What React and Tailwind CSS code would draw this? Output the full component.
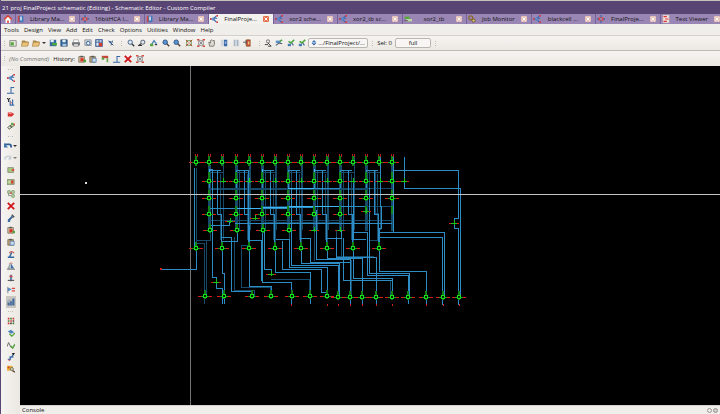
import clsx from "clsx";

const icons = {
  home: <><path d="M0 6 5 1l5 5H8v4H2V6z" fill="#fff" /><path d="M0 6 5 1l5 5" fill="none" stroke="#d8432f" strokeWidth="2" /><path d="M4 7h2v3H4z" fill="#d8432f" /></>,
  library: <><path d="M1 1h3v8H1z" fill="#d04848" /><path d="M3 1h5v8H3z" fill="#3e78b8" /><path d="M4 2h2v5H4z" fill="#d6e8f8" /></>,
  design: <><path d="M5 0v10M0 5h10" stroke="#3a6ba8" strokeWidth="1.6" /><path d="M2 3h6v4H2z" fill="#d44" /><path d="M4 4h2v2H4z" fill="#7ab0e0" /></>,
  schematic: <><path d="M0 5h4M4 5l4-4M4 5l4 4M4 4h5" fill="none" stroke="#3b66a6" strokeWidth="1.4" /><path d="M0 4h2v2H0zM8 0h2v2H8zM8 8h2v2H8z" fill="#e03030" /><path d="M3 3h3v4H3z" fill="#5a8acb" /></>,
  testbench: <><path d="M1 2h6v3H1z" fill="#58a838" /><path d="M3 5h7v3H3z" fill="#b9d9a0" /><path d="M0 7h5" stroke="#555" /></>,
  gear: <><circle cx="3.5" cy="3.5" r="2.5" fill="none" stroke="#8a6a2a" strokeWidth="1.5" /><circle cx="7" cy="7" r="2" fill="#e9c56a" stroke="#5c4a28" /></>,
  text: <><path d="M1 0h8v10H1z" fill="#f3e4e0" stroke="#a99" strokeWidth=".6" /><path d="M2 2h4M4 5h4M2 8h4" stroke="#d33" strokeWidth="1.5" /></>,
  newFile: <><path d="M1 2h8v7H1z" fill="#e8ece0" stroke="#777" /><path d="M2 4h4v4H2z" fill="#57a83c" /></>,
  open: <><path d="M1 2h4l1 1h3v5H1z" fill="#a98b50" /><path d="M2 4h8L8 9H0z" fill="#ecc378" stroke="#9d7a3f" strokeWidth=".7" /></>,
  save: <><path d="M1 1h8v8H1z" fill="#34689e" stroke="#1d3b5e" strokeWidth=".8" /><path d="M3 1h4v3H3z" fill="#e4eef6" /><path d="M3 6h5v3H3z" fill="#a8c6dc" /></>,
  saveAll: <><path d="M1 1h8v8H1z" fill="#34689e" /><path d="M2 1h4v3H2z" fill="#e4eef6" /><path d="M4 5h6v3H4z" fill="#4dab3b" /></>,
  print: <><path d="M2 1h6v4H2z" fill="#fff" stroke="#888" strokeWidth=".7" /><path d="M0 4h10v4H0z" fill="#777b80" /><path d="M2 6h6v3H2z" fill="#e8e8e8" stroke="#444" strokeWidth=".6" /></>,
  preview: <><path d="M1 1h8v7H1z" fill="#cdd4da" stroke="#667" strokeWidth=".7" /><circle cx="5.3" cy="5.3" r="2.3" fill="#e8f2fa" stroke="#365f91" strokeWidth="1.2" /></>,
  table: <><path d="M1 1h8v8H1z" fill="#e4edf7" stroke="#2b4f88" strokeWidth="1.3" /><path d="M1 4h8M5 1v8" stroke="#2b4f88" /><path d="M5 5h4v4H5z" fill="#d9382f" /></>,
  cut: <><path d="M1 2l5 1-2 3z" fill="#4576ad" /><path d="M3 3l5 5M7 2L5 8" stroke="#38587f" strokeWidth="1.2" /></>,
  zoom: <><circle cx="4" cy="4" r="2.7" fill="#dbe9f6" stroke="#4a6788" strokeWidth="1.2" /><path d="M6 6l3 3" stroke="#3b3b3b" strokeWidth="1.7" /></>,
  zoomBlue: <><circle cx="4" cy="4" r="2.8" fill="#5b94d2" stroke="#31588a" strokeWidth="1.2" /><path d="M6 6l3 3" stroke="#4a4036" strokeWidth="1.7" /></>,
  zoomPrev: <><circle cx="6" cy="4" r="2.6" fill="#e0e8ef" stroke="#555f6c" strokeWidth="1.2" /><path d="M4 6L1 8h4" stroke="#333" strokeWidth="1.3" fill="none" /></>,
  zoomGreen: <><path d="M2 7l3-5 3 4" fill="none" stroke="#4c80b8" strokeWidth="1.6" /><path d="M0 6h4v3H0z" fill="#57ab3c" /><path d="M6 7h3" stroke="#444" strokeWidth="1.5" /></>,
  fit: <><path d="M2 2h6v6H2z" fill="#e5dcd5" stroke="#5a9b48" /><path d="M1 1l8 8M9 1L1 9" stroke="#c33b32" strokeWidth="1.2" /><path d="M4 4h2v2H4z" fill="#fff" /></>,
  fitSel: <><path d="M2 2h6v6H2z" fill="#e3e3e3" stroke="#8c8c8c" /><path d="M0 0h3v2H0zM7 0h3v2H7zM0 8h3v2H0zM7 8h3v2H7z" fill="#d4514a" /><path d="M3 3l4 4M7 3L3 7" stroke="#777" /></>,
  hand: <path d="M2 9L1 4l2 1V2l2-1 1 1 2 0v5L7 9z" fill="#ddd9d3" stroke="#6b665f" strokeWidth="1" />,
  half: <><path d="M1 1h8v8H1z" fill="#cfd6de" /><path d="M5 1h4v8H5z" fill="#3a6ba8" /><path d="M6 3h2v3H6z" fill="#9db8da" /></>,
  halfPale: <><path d="M2 1h7v8H2z" fill="#cdd3db" /><path d="M3 1v8M7 1v8" stroke="#98a6b9" /></>,
  exit: <><path d="M4 1h5v8H4z" fill="#c94539" stroke="#83531f" strokeWidth=".8" /><path d="M0 4h5M3 2l2 2-2 2" stroke="#444" fill="none" /><path d="M6 3h2v4H6z" fill="#eac57a" /></>,
  probe: <><circle cx="5" cy="3" r="2" fill="#eee" stroke="#555" /><path d="M1 7h4M5 5l4 4M5 9h4" stroke="#444" strokeWidth="1.2" /></>,
  check: <><path d="M1 6h4v3H1z" fill="#4779b5" /><path d="M2 3l3 2 4-4" stroke="#4ba43a" strokeWidth="2" fill="none" /><path d="M6 5l2 3" stroke="#3c639a" strokeWidth="1.4" /></>,
  checkBlue: <><path d="M1 2h6v3H1z" fill="#5b92cc" /><path d="M1 8l4-3 4 1" stroke="#505b68" strokeWidth="1.4" fill="none" /><path d="M6 3l3-2" stroke="#50a53e" strokeWidth="2" /></>,
  diamond: <><path d="M5 0l4 4H1z" fill="#3c73b8" /><path d="M1 5h8L5 9z" fill="#315b93" /><path d="M3 4h4v2H3z" fill="#9cc3ea" /></>,
  paste: <><path d="M1 2h7v7H1z" fill="#c4a67a" stroke="#5d503d" strokeWidth=".8" /><path d="M3 1h3v2H3z" fill="#555" /><path d="M4 4h5v5H4z" fill="#c8daec" stroke="#3b6ba5" strokeWidth=".8" /></>,
  pasteRed: <><path d="M1 2h7v7H1z" fill="#d9c3a4" stroke="#5d503d" strokeWidth=".8" /><path d="M3 1h3v2H3z" fill="#555" /><path d="M3 4h4v4H3z" fill="#d93027" /><path d="M7 6h3v3H7z" fill="#4fa33d" /></>,
  align: <><path d="M1 1h8v3H1z" fill="#c8463a" /><path d="M1 3h3v3H1z" fill="#5ba544" /><path d="M7 4h2v5H7z" fill="#64a64d" /></>,
  wire: <path d="M0 9h9M5 9V2h4" fill="none" stroke="#3767a5" strokeWidth="1.3" />,
  del: <path d="M1 1l8 8M9 1L1 9" stroke="#d0161b" strokeWidth="2.3" />,
  wireName: <><path d="M0 0l2 2 2-2M2 2v3" stroke="#222" strokeWidth="1.3" fill="none" /><path d="M4 3v6h5M7 2v6" stroke="#3a6daa" strokeWidth="1.5" fill="none" /><path d="M4 5h2v2H4z" fill="#d77" /></>,
  pin: <><path d="M1 3h5l3 2-3 3H1z" fill="#d72e2e" /><path d="M2 3h4v2H2z" fill="#f08c8c" /></>,
  link: <><path d="M1 7l3-3 2 2-3 3zM4 5l3-3 2 2-3 3z" fill="#ddd" stroke="#4d5d38" strokeWidth="1.2" /><path d="M5 1h3v3H5z" fill="#59a948" /><path d="M8 2h2v2H8z" fill="#d54" /></>,
  undo: <><path d="M1 3h6q2 0 2 4" fill="none" stroke="#2f5f96" strokeWidth="2.4" /><path d="M0 1v6h5z" fill="#4177ae" /></>,
  redo: <><path d="M1 7q0-4 4-4h3" fill="none" stroke="#b9c5d0" strokeWidth="2.4" /><path d="M9 1v6H5z" fill="#a6b7c6" /></>,
  move: <><path d="M1 2h7v6H1z" fill="#a6c97c" stroke="#808976" /><path d="M6 4h3v2H6z" fill="#e0332d" /></>,
  copy: <><path d="M0 2h9v6H0z" fill="#a9c583" stroke="#80836f" /><path d="M5 3h3v4H5z" fill="#d64339" /><path d="M2 4h2v2H2z" fill="#d6e6c0" /></>,
  nodes: <><path d="M1 1h3v3H1zM6 1h3v3H6zM6 6h3v3H6z" fill="#e8efd9" stroke="#5d8a48" /><path d="M2 4v3h3" stroke="#777" fill="none" /><path d="M4 3h2v2H4z" fill="#d44" /></>,
  wrench: <><path d="M2 8l5-5" stroke="#36608f" strokeWidth="2.5" /><path d="M6 1l3 3" stroke="#555" strokeWidth="2" fill="none" /><path d="M1 7h3v3H1z" fill="#3c6da8" /></>,
  rotate: <><path d="M1 9h8M3 9l3-6" stroke="#3568a2" strokeWidth="1.8" /><path d="M3 4q2-4 6 0" stroke="#cf5452" strokeWidth="1.4" fill="none" /></>,
  flipH: <><path d="M1 8l3-6v6z" fill="#b5c3d3" stroke="#677" strokeWidth=".6" /><path d="M5 2l4 6H5z" fill="#396ca8" /><path d="M3 2q2-2 4 0" stroke="#c55" fill="none" /><path d="M0 9h10" stroke="#555" /></>,
  flipV: <><path d="M5 1v8" stroke="#3767a3" strokeWidth="2" /><path d="M1 8h8" stroke="#555" strokeWidth="1.4" /><path d="M3 2h4v2H3z" fill="#ce4a45" /></>,
  flag: <><path d="M1 1v8" stroke="#777" /><path d="M1 2l5 2-5 3z" fill="#5888bd" /><path d="M6 3h4M6 6h4" stroke="#d8433e" strokeWidth="1.5" /></>,
  chart: <path d="M1 9V6h2v3zM4 9V4h2v5zM7 9V1h2v8zM0 5l4-3" fill="#406fa9" stroke="#3f6591" strokeWidth=".6" />,
  grid: <><path d="M1 1h2v2H1zM4 4h2v2H4zM7 1h2v2H7zM1 7h2v2H1z" fill="#ce332c" /><path d="M4 1h2v2H4zM1 4h2v2H1zM7 7h2v2H7z" fill="#3d7e30" /><path d="M7 4h2v2H7zM4 7h2v2H4z" fill="#4a3a30" /></>,
  verify: <><path d="M1 3l4-2 4 3-4 2z" fill="#4d82bf" /><path d="M3 6l3 3 4-4" stroke="#54a53c" strokeWidth="1.6" fill="none" /></>,
  wave: <><path d="M0 7l2-5 3 6" fill="none" stroke="#666" strokeWidth="1.2" /><path d="M5 6l2 3 3-5" stroke="#4c9d36" strokeWidth="1.6" fill="none" /></>,
  steps: <><path d="M1 8h3V5h3V2" fill="none" stroke="#376baa" strokeWidth="1.8" /><path d="M6 0h4L8 3z" fill="#222" /><path d="M2 8h2v2H2z" fill="#c66" /></>,
  inspect: <><path d="M0 1h7v6H0z" fill="#e9ae37" /><path d="M1 2h2v2H1z" fill="#d43b2f" /><circle cx="6" cy="5" r="2" fill="#bcd2b0" stroke="#765" /><path d="M7 7l3 2" stroke="#543" strokeWidth="1.6" /></>,
};

function Icon({ name, className = "size-2" }) {
  return <svg viewBox="0 0 10 10" aria-hidden="true" className={clsx("shrink-0", className)}>{icons[name]}</svg>;
}

function IconButton({ name, className }) {
  return (
    <button aria-label={name} className={clsx("flex items-center justify-center", className)}>
      <Icon name={name} />
    </button>
  );
}

function Grip({ vertical }) {
  return (
    <span className={clsx("flex items-center justify-center gap-px", vertical ? "w-full" : "h-full w-1 flex-col")}>
      <i className="size-px bg-[#bdb8b1]" />
      <i className="size-px bg-[#d0ccc6]" />
      <i className="size-px bg-[#bdb8b1]" />
    </span>
  );
}

function Caret() {
  return <span className="border-x-2 border-t-2 border-x-transparent border-t-[#333]" />;
}

const tabs = [
  { icon: "library", label: "Library Ma..." },
  { icon: "design", label: "16bitHCA l..." },
  { icon: "library", label: "Library Ma..." },
  { icon: "schematic", label: "FinalProje...", active: true },
  { icon: "schematic", label: "xor2 sche..." },
  { icon: "schematic", label: "xor2_tb sc..." },
  { icon: "testbench", label: "xor2_tb" },
  { icon: "gear", label: "Job Monitor" },
  { icon: "schematic", label: "blackcell ..." },
  { icon: "design", label: "FinalProje..." },
  { icon: "text", label: "Text Viewer" },
];

const menus = ["Tools", "Design", "View", "Add", "Edit", "Check", "Options", "Utilities", "Window", "Help"];
const fileTools = ["saveAll", "save", "print", "preview", "table", "cut"];
const viewTools = ["zoom", "zoomPrev", "zoomGreen", "zoomBlue", "zoomBlue", "fit", "fitSel", "hand", "half", "halfPale", "exit"];
const checkTools = ["probe", "checkBlue", "check", "check"];
const historyTools = ["pasteRed", "paste", "align", "wire", "del", "fitSel"];
const drawTools = ["schematic", "wire", "wireName", "pin", "link"];
const editTools = ["move", "copy", "nodes", "del", "wrench", "pasteRed", "paste", "rotate", "flipH", "flipV", "flag", "chart"];
const checkSideTools = ["grid", "verify", "wave", "steps", "inspect"];

// Gates: [x, y], all in sheet coordinates
const columns = [209, 236, 262, 288, 314, 340, 366, 392];
const inputs = [196, 209, 222, 236, 249, 262, 275, 288, 301, 314, 327, 340, 353, 366, 379, 392];
const gates = [
  ...inputs.map((x) => [x, 162]),
  ...columns.map((x) => [x, 181]),
  ...columns.map((x) => [x, 198]),
  ...columns.slice(0, 6).map((x) => [x, 214]),
  [210, 230], [237, 230], [263, 230], [289, 230],
  ...[196, 222, 249, 275, 301, 327, 353, 379].map((x) => [x, 248]),
  ...[205, 224, 252, 271, 292, 310, 327].map((x) => [x, 296]),
  ...[338, 350, 362, 376, 392, 408, 426, 443, 459].map((x) => [x, 297]),
];
const buffers = [
  ...[223, 249, 275, 301, 327, 353, 380, 404].map((x) => [x, 181]),
  [230, 221], [255, 218], [366, 211], [314, 230], [340, 230], [216, 282], [271, 274], [454, 223],
];

const brightWires = [
  "M194 168V248", "M210 208H262", "M262 208H288V206H366", "M288 207H314",
  "M393 170H458V218H454V228H458V305", "M404 157V188H460V297", "M196 250V269H162",
  "M210 225H229V221", "M235 223H392", "M262 231V282H291V304", "M264 228V269H271V274",
  "M212 188V277H216V288H222V304", "M222 249V273H224V304", "M222 241H237V230",
  "M222 237H231V291H252V296", "M249 225V286H271V296", "M249 240H261V281",
  "M275 250V272H310V304", "M276 239H289V267H327V296", "M282 241V269H321V292H327",
  "M291 188V265H338V297", "M301 250V263H339V297", "M301 238H310V262H350V305",
  "M316 210V259H350V304", "M327 250V258H362V305", "M327 238H341V230",
  "M336 237V257H376V305", "M343 238V280H392V297", "M353 251V278H392V297",
  "M353 232H367V275H408V304", "M353 239H366", "M369 188V273H409V297",
  "M379 251V271H426V305", "M379 237H442V305", "M380 232H444V297",
  "M380 157V206H381V228H379V250", "M393 157V232", "M210 169H212V188",
  "M288 188H340", "M353 178V240", "M248 170V240",
];
const dimWires = [
  "M196 168V250", "M196 240H210V230", "M196 243H204V304", "M206 240V296", "M223 157V240",
  "M234 237V290H254V296", "M241 246V287H270", "M249 245H241V287", "M210 188H392", "M210 189H366",
  "M210 220H392", "M262 222H340", "M262 206H392", "M271 279H309V296", "M353 188V250",
  "M375 171V213H378V250", "M289 230V267", "M327 157V250", "M301 157V250", "M275 157V250",
  "M249 157V240", "M351 260V297", "M362 262V297", "M338 265V297", "M390 280V297", "M314 230V261",
  "M260 287H270V296", "M336 230V256H374", "M369 240H380", "M341 232V257",
];

function Gate({ x, y }) {
  return (
    <g transform={`translate(${x} ${y})`}>
      <path d="M-7 0h3M4 0h3" stroke="#d81c1c" />
      <path d="M-4 0h8" stroke="#12a01a" />
      <path d="M0-6v9" stroke="#0f8214" strokeWidth="2" />
      <rect x="-1.5" y="-1.5" width="3" height="3" fill="#031f03" stroke="#16e01c" />
    </g>
  );
}

function Schematic() {
  return (
    <svg viewBox="20 66 700 339" preserveAspectRatio="xMinYMin slice" className="size-full" role="img" aria-label="FinalProject schematic" shapeRendering="crispEdges" fill="none">
      <path d="M190 66V405" stroke="#747476" />
      <g stroke="#174a68">
        {columns.map((x) => (
          <path key={x} d={`M${x} 157V231M${x + 1} 165V231`} strokeWidth="2" />
        ))}
        {columns.slice(0, 7).map((x) => (
          <path key={x} d={`M${x} 172h14M${x + 3} 171v60M${x + 14} 157v73M${x + 11} 174v66`} />
        ))}
        {dimWires.map((d) => <path key={d} d={d} />)}
      </g>
      <g stroke="#2e8cc4">
        {columns.slice(0, 7).map((x) => (
          <path key={x} d={`M${x} 188V170h12M${x + 8} 171v43h4v34`} />
        ))}
        {brightWires.map((d) => <path key={d} d={d} />)}
      </g>
      <path d="M236 208H262M262 207H288M288 206H340M209 169V177M262 169V177M314 169V177M288 188H314" stroke="#3db7f5" />
      {inputs.map((x) => <path key={x} d={`M${x} 157v9`} stroke="#15801b" strokeWidth="2" />)}
      {inputs.map((x) => <path key={x} d={`M${x - 1} 154v3M${x + 1} 154v3`} stroke="#b81c1c" />)}
      <path d="M190 162H396" stroke="#0a4a10" strokeDasharray="8 5" />
      {columns.map((x) => <path key={x} d={`M${x} 172v8M${x} 190v8M${x} 206v8`} stroke="#11851a" strokeWidth="2" />)}
      {gates.map(([x, y]) => <Gate key={`${x}-${y}`} x={x} y={y} />)}
      {buffers.map(([x, y]) => (
        <g key={`${x}-${y}`} transform={`translate(${x} ${y})`}>
          <path d="M-5 0h10" stroke="#c81818" />
          <path d="M-3 0h6M0-3v5" stroke="#18c41c" />
        </g>
      ))}
      <path d="M160 269h2M291 305h1M327 305h1M338 305h1M350 305h1M362 305h1M376 305h1M392 305h1M426 305h1M443 305h1M459 305h1" stroke="#d82020" strokeWidth="2" />
      <path d="M20 194H720" stroke="#c4c4c4" />
      <path d="M85 183h2" stroke="#ddd" strokeWidth="2" />
    </svg>
  );
}

export default function App() {
  return (
    <div className="flex h-screen flex-col overflow-hidden border-l border-[#5b4678] bg-[#f0eeea] font-['Open_Sans',sans-serif] text-[6px] leading-[8px] text-[#111]">
      <header className="flex h-[14px] shrink-0 items-center border-t border-[#c3c5bd] bg-[#594574] px-px text-white">
        21 proj FinalProject schematic (Editing) - Schematic Editor - Custom Compiler
      </header>

      <nav className="flex h-[10px] shrink-0 overflow-hidden bg-[#9986b4]">
        <button aria-label="Home" className="flex w-[14px] shrink-0 items-center justify-center">
          <Icon name="home" />
        </button>
        <div className="-mr-1 grid flex-1 grid-cols-11">
          {tabs.map((tab, i) => (
            <div key={i} className={clsx("flex min-w-0 items-center border-l border-[#77639a] pr-1 pl-px", tab.active && "bg-[#f3f1ed]")}>
              <Icon name={tab.icon} />
              <button className="min-w-0 flex-1 text-center whitespace-nowrap">{tab.label}</button>
              <button aria-label={`Close ${tab.label}`} className={clsx("flex size-[6px] shrink-0 items-center justify-center rounded-[1px]", tab.active ? "bg-[#e2714c]" : "bg-[#e8c5b8]")}>
                <svg viewBox="0 0 4 4" className="size-[4px]"><path d="M.5.5l3 3M3.5.5l-3 3" stroke="#fff" /></svg>
              </button>
            </div>
          ))}
        </div>
      </nav>

      <nav className="flex h-3 shrink-0 items-center gap-[5px] border-b border-[#d4d1cc] pl-[3px]">
        {menus.map((menu) => <button key={menu}>{menu}</button>)}
      </nav>

      <div className="flex h-[15px] shrink-0 items-center border-b border-[#bdbab6] bg-linear-to-b from-[#f6f4f1] to-[#ebe8e3] pl-px">
        <Grip />
        <IconButton name="newFile" className="ml-px w-3" />
        <IconButton name="open" className="w-3" />
        <IconButton name="open" className="w-[10px]" />
        <button aria-label="Recent designs" className="flex h-full w-[6px] items-center justify-center"><Caret /></button>
        <div className="grid w-[70px] grid-cols-6">
          {fileTools.map((name) => <IconButton key={name} name={name} />)}
        </div>
        <span className="ml-[2px] h-full"><Grip /></span>
        <div className="ml-[2px] grid w-32 grid-cols-11">
          {viewTools.map((name, i) => <IconButton key={i} name={name} />)}
        </div>
        <span className="ml-1 h-full"><Grip /></span>
        <div className="ml-px grid w-[46px] grid-cols-4">
          {checkTools.map((name, i) => <IconButton key={i} name={name} />)}
        </div>
        <button className="flex h-[10px] w-[60px] items-center justify-center gap-px rounded-[2px] border border-[#bab6b0] bg-[#f7f6f4] whitespace-nowrap">
          <Icon name="diamond" className="size-[6px]" />
          .../FinalProject/...
        </button>
        <span className="ml-[2px] h-full"><Grip /></span>
        <span className="w-[21px] text-center whitespace-nowrap">Sel: 0</span>
        <button className="h-[10px] w-9 rounded-[2px] border border-[#bab6b0] bg-[#f7f6f4] leading-none">full</button>
        <span className="ml-[2px] h-full"><Grip /></span>
      </div>

      <div className="flex h-[15px] shrink-0 items-center bg-linear-to-b from-[#f6f4f1] to-[#ebe8e3] pl-px">
        <Grip />
        <span className="ml-[3px] text-[#777] italic">(No Command)</span>
        <span className="ml-1">History:</span>
        <div className="ml-px grid w-[70px] grid-cols-6">
          {historyTools.map((name) => <IconButton key={name} name={name} />)}
        </div>
      </div>

      <div className="flex min-h-0 flex-1">
        <aside className="w-[19px] shrink-0 bg-linear-to-r from-[#f6f4f1] to-[#ebe8e3]">
          <div className="flex h-[6px]"><Grip vertical /></div>
          {drawTools.map((name) => <IconButton key={name} name={name} className="h-3 w-full" />)}
          <div className="flex h-2"><Grip vertical /></div>
          <div className="flex h-3 items-center gap-px pl-[3px]">
            <IconButton name="undo" />
            <Caret />
          </div>
          <div className="flex h-3 items-center gap-px pl-[3px] opacity-60">
            <IconButton name="redo" />
            <Caret />
          </div>
          {editTools.map((name) => (
            <IconButton key={name} name={name} className={clsx("mx-auto h-3 w-[10px]", name === "chart" && "bg-[#c9c6c1]")} />
          ))}
          <div className="flex h-[7px]"><Grip vertical /></div>
          {checkSideTools.map((name) => <IconButton key={name} name={name} className="h-3 w-full" />)}
        </aside>
        <main className="flex min-w-0 flex-1 flex-col">
          <div className="min-h-0 flex-1 bg-black"><Schematic /></div>
          <footer className="flex h-[9px] shrink-0 items-center justify-between border-t border-[#d4d1cc] px-[2px]">
            <span>Console</span>
            <span className="flex gap-px">
              <button aria-label="Float console" className="size-[5px] rounded-full border border-[#9a9691]" />
              <button aria-label="Close console" className="size-[5px] rounded-full border border-[#9a9691] bg-[#cfccc7]" />
            </span>
          </footer>
        </main>
      </div>
    </div>
  );
}
